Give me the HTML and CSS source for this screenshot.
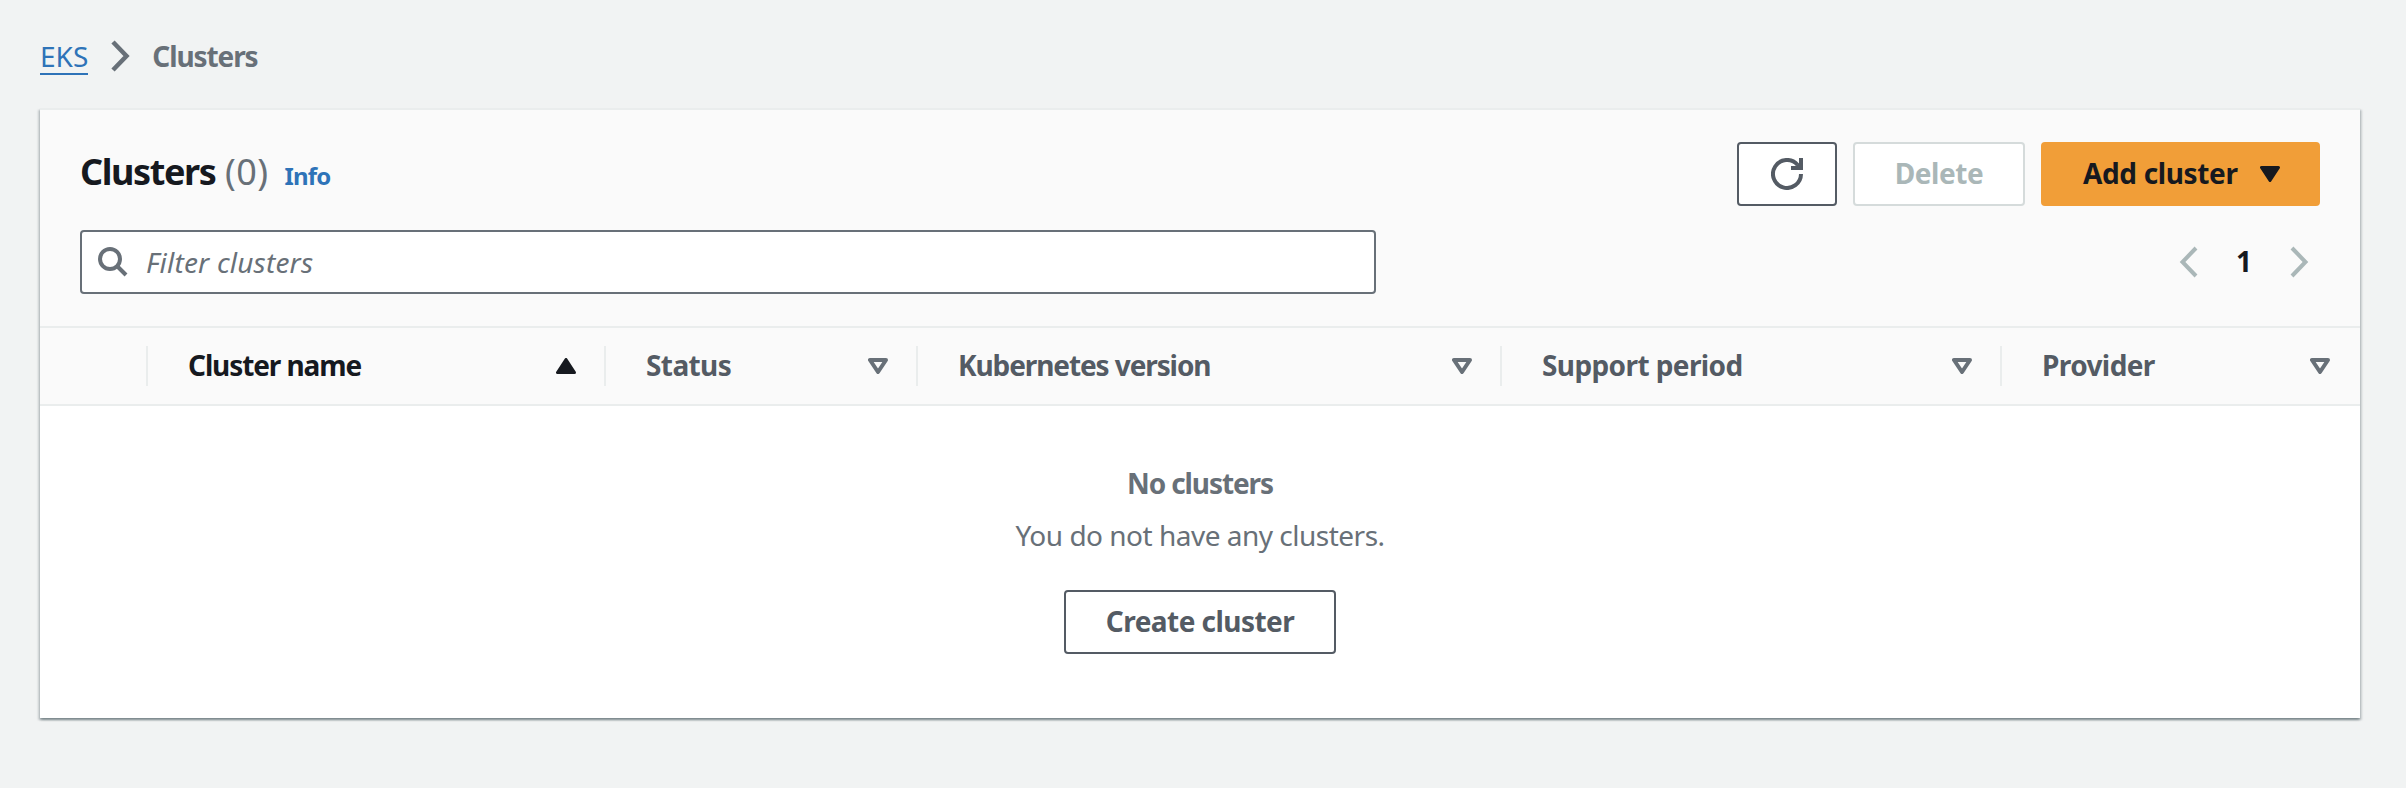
FILE: index.html
```
<!DOCTYPE html>
<html lang="en">
<head>
<meta charset="utf-8">
<title>Clusters</title>
<link rel="stylesheet" href="styles.css">
</head>
<body>
<nav class="breadcrumb">
  <a class="breadcrumb-link" href="#">EKS</a>
  <svg class="breadcrumb-sep" viewBox="0 0 20 32"><path d="M3 2l13.500 14L3 30"/></svg>
  <span class="breadcrumb-current">Clusters</span>
</nav>
<main class="card">
  <header class="card-head">
    <div class="title-row">
      <div class="heading">
        <h1 class="title">Clusters</h1>
        <span class="count">(0)</span>
        <a class="info" href="#">Info</a>
      </div>
      <div class="actions">
        <button class="btn btn-refresh" aria-label="Refresh">
          <svg class="refresh" viewBox="0 0 32 32"><path class="line" d="M30 16A14 14 0 1 1 26.500 6.700"/><path class="head" d="M28 0h4v12H20V8h4.500L28 5z"/></svg>
        </button>
        <button class="btn btn-delete" disabled><span class="label">Delete</span></button>
        <button class="btn btn-primary"><span class="label">Add cluster</span>
          <svg class="caret" viewBox="0 0 20 16"><path d="M1.500 1.500h17L10 14.500z"/></svg>
        </button>
      </div>
    </div>
    <div class="filter-row">
      <div class="filter">
        <svg class="search" viewBox="0 0 30 30"><circle cx="12" cy="12" r="10"/><path d="M18.500 18.500L28 28"/></svg>
        <span class="placeholder">Filter clusters</span>
      </div>
      <div class="pager">
        <svg class="chev" viewBox="0 0 20 32"><path d="M17 2L3.500 16 17 30"/></svg>
        <span class="page">1</span>
        <svg class="chev" viewBox="0 0 20 32"><path d="M3 2l13.500 14L3 30"/></svg>
      </div>
    </div>
  </header>
  <div class="columns">
    <div class="col"></div>
    <div class="col sorted"><span class="label tight">Cluster name</span><svg class="sort" viewBox="0 0 20 16"><path d="M1.500 14.500h17L10 1.500z"/></svg></div>
    <div class="col"><span class="label">Status</span><svg class="sort" viewBox="0 0 20 16"><path d="M2 2h16l-8 12z"/></svg></div>
    <div class="col"><span class="label tight">Kubernetes version</span><svg class="sort" viewBox="0 0 20 16"><path d="M2 2h16l-8 12z"/></svg></div>
    <div class="col"><span class="label">Support period</span><svg class="sort" viewBox="0 0 20 16"><path d="M2 2h16l-8 12z"/></svg></div>
    <div class="col"><span class="label">Provider</span><svg class="sort" viewBox="0 0 20 16"><path d="M2 2h16l-8 12z"/></svg></div>
  </div>
  <section class="empty">
    <p class="empty-title">No clusters</p>
    <p class="empty-text">You do not have any clusters.</p>
    <button class="btn btn-create"><span class="label">Create cluster</span></button>
  </section>
</main>
</body>
</html>
```
FILE: styles.css
```
* { box-sizing: border-box; }

body {
  margin: 0;
  height: 788px;
  overflow: hidden;
  background: #f1f3f3;
  color: #545b64;
  font: 28px/40px "Noto Sans", sans-serif;
}

a { text-decoration: none; color: #2e73b8; }
p, h1 { margin: 0; }
svg { display: block; flex: none; fill: none; }

/* Breadcrumb */
.breadcrumb {
  display: flex;
  align-items: flex-start;
  gap: 22px;
  height: 108px;
  padding: 37px 40px 0;
  line-height: 38px;
}
.breadcrumb-link { height: 38px; border-bottom: 2px solid; }
.breadcrumb-sep { width: 20px; height: 32px; margin-top: 3px; stroke: #687078; stroke-width: 4.5; }
.breadcrumb-current { font-weight: 700; letter-spacing: -1.1px; color: #687078; }

/* Card */
.card {
  height: 610px;
  margin: 0 46px 0 40px;
  border-top: 2px solid #eaeded;
  background: #fff;
  box-shadow: 0 2px 2px 0 rgba(0, 28, 36, .3), 2px 2px 2px 0 rgba(0, 28, 36, .15), -2px 2px 2px 0 rgba(0, 28, 36, .15);
}
.card-head { padding: 32px 40px; background: #fafafa; }
.title-row, .filter-row { display: flex; align-items: center; justify-content: space-between; height: 64px; }
.filter-row { margin-top: 24px; }
.heading { display: flex; align-items: baseline; }
.title { font-size: 36px; line-height: 40px; font-weight: 700; letter-spacing: -1.4px; color: #16191f; }
.count { margin-left: 9.500px; font-size: 36px; letter-spacing: .5px; color: #687078; }
.info { margin-left: 16px; font-size: 24px; font-weight: 700; letter-spacing: -.9px; }

/* Buttons */
.actions { display: flex; gap: 16px; }
.btn {
  display: flex;
  align-items: center;
  justify-content: center;
  height: 64px;
  padding: 0;
  border: 2px solid #545b64;
  border-radius: 4px;
  background: #fff;
  color: #545b64;
  font: 700 28px/40px "Noto Sans", sans-serif;
}
.btn .label { margin-bottom: 2px; }
.btn-refresh { width: 100px; }
.refresh { width: 32px; height: 32px; }
.refresh .line { stroke: #545b64; stroke-width: 4; }
.refresh .head { fill: #545b64; }
.btn-delete { width: 172px; border-color: #d5dbdb; color: #aab7b8; letter-spacing: -.4px; }
.btn-primary {
  width: 279px;
  justify-content: space-between;
  padding: 0 38px 0 40px;
  border-color: #f19e38;
  background: #f19e38;
  color: #16191f;
  letter-spacing: -.35px;
}
.caret { width: 20px; height: 16px; fill: #16191f; stroke: #16191f; stroke-width: 3; stroke-linejoin: round; }

/* Filter and pagination */
.filter {
  display: flex;
  align-items: center;
  gap: 18px;
  width: 1296px;
  height: 64px;
  padding-left: 16px;
  border: 2px solid #687078;
  border-radius: 4px;
  background: #fff;
}
.search { width: 30px; height: 30px; stroke: #687078; stroke-width: 4; }
.placeholder { font-style: italic; letter-spacing: .2px; color: #687078; }
.pager { display: flex; align-items: center; gap: 37px; margin-right: 11px; }
.chev { width: 20px; height: 32px; stroke: #aab7b8; stroke-width: 4; }
.page { margin-bottom: 2px; font-weight: 700; color: #16191f; }

/* Table header */
.columns {
  display: grid;
  grid-template-columns: 108px 458px 312px 584px 500px 358px;
  align-items: center;
  height: 80px;
  border-top: 2px solid #eaeded;
  border-bottom: 2px solid #eaeded;
  background: #fafafa;
}
.col {
  display: flex;
  align-items: center;
  justify-content: space-between;
  height: 40px;
  padding: 0 28px 0 40px;
  border-right: 2px solid #eaeded;
  font-weight: 700;
  letter-spacing: -.6px;
}
.col:last-child { padding-right: 30px; border-right: 0; }
.col .label { margin-bottom: 2px; }
.col .tight { letter-spacing: -1.1px; }
.sort { width: 20px; height: 16px; stroke: #687078; stroke-width: 4; stroke-linejoin: round; }
.sorted { color: #16191f; }
.sorted .sort { fill: #16191f; stroke: #16191f; stroke-width: 3; }

/* Empty state */
.empty { display: flex; flex-direction: column; align-items: center; padding-top: 57px; color: #687078; }
.empty-title { font-weight: 700; letter-spacing: -1.1px; }
.empty-text { margin-top: 12px; letter-spacing: -.5px; }
.btn-create { width: 272px; margin-top: 35px; letter-spacing: -.55px; }
```
